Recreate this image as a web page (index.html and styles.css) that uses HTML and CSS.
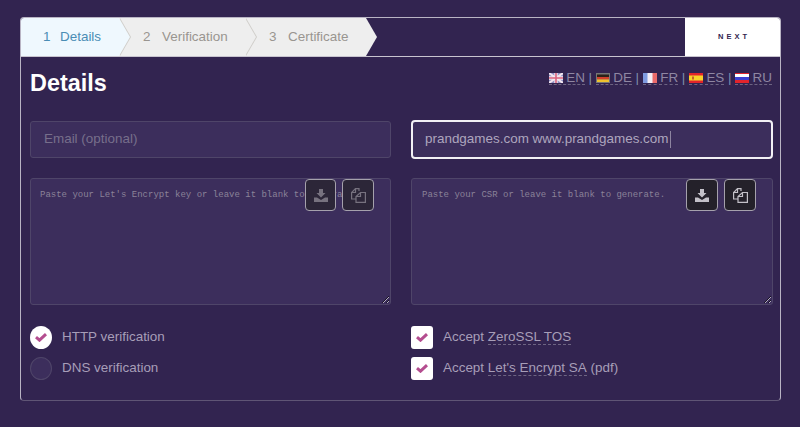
FILE: index.html
```html
<!DOCTYPE html>
<html lang="en">
<head>
<meta charset="utf-8">
<title>Details</title>
<link rel="stylesheet" href="styles.css">
</head>
<body>
<main class="card">
  <nav class="steps">
    <div class="step step-active step-1"><span class="num">1</span>Details</div>
    <div class="step step-2"><span class="num">2</span>Verification</div>
    <div class="step step-3"><span class="num">3</span>Certificate</div>
    <div class="next">NEXT</div>
  </nav>
  <section class="content">
    <header class="title-row">
      <h1>Details</h1>
      <div class="langs">
        <a class="lang"><svg class="flag" viewBox="0 0 14 10"><rect width="14" height="10" fill="#8f8fc4"/><path d="M0 0L14 10M14 0L0 10" stroke="#f3e6ee" stroke-width="2"/><path d="M7 0V10M0 5H14" stroke="#f4e9ef" stroke-width="3.4"/><path d="M7 0V10M0 5H14" stroke="#d9627e" stroke-width="1.6"/></svg> EN</a>
        <span class="sep">|</span>
        <a class="lang"><svg class="flag" viewBox="0 0 14 10"><rect width="14" height="10" fill="#777"/><rect x="1" y="1.5" width="12" height="2.5" fill="#2b2118"/><rect x="1" y="4" width="12" height="2.5" fill="#d2402c"/><rect x="1" y="6.5" width="12" height="2.5" fill="#eec22e"/></svg> DE</a>
        <span class="sep">|</span>
        <a class="lang"><svg class="flag" viewBox="0 0 14 10"><rect width="14" height="10" fill="#f3eef5"/><rect width="4.500" height="10" fill="#7f9be0"/><rect x="9.500" width="4.500" height="10" fill="#ea6a6a"/></svg> FR</a>
        <span class="sep">|</span>
        <a class="lang"><svg class="flag" viewBox="0 0 14 10"><rect width="14" height="10" fill="#e2242c"/><rect y="2.500" width="14" height="5" fill="#f6d32a"/><rect x="3" y="3.500" width="2" height="3" fill="#c9602a"/></svg> ES</a>
        <span class="sep">|</span>
        <a class="lang"><svg class="flag" viewBox="0 0 14 10"><rect width="14" height="10" fill="#e2242c"/><rect y="1" width="14" height="3" fill="#fff"/><rect y="4" width="14" height="3" fill="#3c3fd0"/></svg> RU</a>
      </div>
    </header>

    <div class="grid">
      <input class="field" type="text" placeholder="Email (optional)">
      <div class="field-wrap">
        <input class="field field-focus" type="text" value="prandgames.com www.prandgames.com">
        <span class="caret"></span>
      </div>

      <div class="area-wrap">
        <textarea class="area area-left" placeholder="Paste your Let's Encrypt key or leave it blank to generate."></textarea>
        <div class="tools tools-dim">
          <button class="tool tool-narrow" type="button"><svg class="icon-dl" viewBox="0 0 14 13"><path d="M5 0h4v4h2.500L7 8.500 2.500 4H5z" fill="currentColor"/><path d="M0 8.500h3L7 11l4-2.500h3V13H0z" fill="currentColor"/></svg></button>
          <button class="tool" type="button"><svg class="icon-copy" viewBox="0 0 15 15" fill="none" stroke="currentColor" stroke-width="1.200"><path d="M8 3V.6H4.500L.6 4.500V11H5"/><path d="M4.500.6v3.900H.6"/><path d="M9.500 4.500h4.900v9.900H5V8.500z"/><path d="M9.500 4.500v4H5"/></svg></button>
        </div>
      </div>
      <div class="area-wrap">
        <textarea class="area" placeholder="Paste your CSR or leave it blank to generate."></textarea>
        <div class="tools">
          <button class="tool" type="button"><svg class="icon-dl" viewBox="0 0 14 13"><path d="M5 0h4v4h2.500L7 8.500 2.500 4H5z" fill="currentColor"/><path d="M0 8.500h3L7 11l4-2.500h3V13H0z" fill="currentColor"/></svg></button>
          <button class="tool" type="button"><svg class="icon-copy" viewBox="0 0 15 15" fill="none" stroke="currentColor" stroke-width="1.200"><path d="M8 3V.6H4.500L.6 4.500V11H5"/><path d="M4.500.6v3.900H.6"/><path d="M9.500 4.500h4.900v9.900H5V8.500z"/><path d="M9.500 4.500v4H5"/></svg></button>
        </div>
      </div>

      <ul class="options">
        <li class="option"><span class="mark mark-round mark-on"><svg viewBox="0 0 12 9"><path d="M1 4.200l3.500 3 6.500-6" fill="none" stroke="currentColor" stroke-width="3"/></svg></span>HTTP verification</li>
        <li class="option"><span class="mark mark-round mark-off"></span>DNS verification</li>
      </ul>
      <ul class="options">
        <li class="option"><span class="mark mark-square mark-on"><svg viewBox="0 0 12 9"><path d="M1 4.200l3.500 3 6.500-6" fill="none" stroke="currentColor" stroke-width="3"/></svg></span>Accept&nbsp;<a class="link">ZeroSSL TOS</a></li>
        <li class="option"><span class="mark mark-square mark-on"><svg viewBox="0 0 12 9"><path d="M1 4.200l3.500 3 6.500-6" fill="none" stroke="currentColor" stroke-width="3"/></svg></span>Accept&nbsp;<a class="link">Let's Encrypt SA</a>&nbsp;(pdf)</li>
      </ul>
    </div>
  </section>
</main>
</body>
</html>
```

FILE: styles.css
```css
* { box-sizing: border-box; }

html, body { height: 100%; }

body {
  margin: 0;
  padding: 17px 19px 26px 20px;
  background: #322450;
  font-family: "Liberation Sans", Arial, sans-serif;
  font-size: 13.45px;
}

.card {
  width: 761px;
  height: 384px;
  border: 1px solid #b9b4c4;
  border-bottom-color: #5f5575;
  border-radius: 4px;
}

/* steps */
.steps {
  display: flex;
  height: 39px;
  border-bottom: 1px solid #c8c4cf;
}

.step {
  position: relative;
  display: flex;
  align-items: center;
  height: 38px;
  padding-bottom: 2px;
  background: #eeeeee;
  color: #999590;
}

.step::before,
.step::after {
  content: "";
  position: absolute;
  top: 0;
  width: 11px;
  height: 100%;
  clip-path: polygon(0 0, 100% 50%, 0 100%);
}

.step::before { left: 100%; margin-left: 1px; background: #cfcdc9; }
.step::after { left: 100%; background: #eeeeee; }

.step-active { background: #eff8fe; color: #4a8db5; border-top-left-radius: 3px; }
.step-active::after { background: #eff8fe; }

.step-1 { width: 98px; padding-left: 22px; z-index: 3; }
.step-2 { width: 126px; padding-left: 24px; z-index: 2; }
.step-3 { width: 121px; padding-left: 24px; z-index: 1; }
.step-3::before { display: none; }

.num { width: 17px; }
.step-2 .num, .step-3 .num { width: 19px; }

.next {
  margin-left: auto;
  width: 95px;
  height: 38px;
  padding: 0 0 1px 3px;
  display: flex;
  align-items: center;
  justify-content: center;
  background: #fff;
  color: #33254f;
  font-size: 7.5px;
  font-weight: bold;
  letter-spacing: 3px;
  border-top-right-radius: 3px;
}

/* content */
.content { padding: 0 7px 0 9px; }

.title-row {
  display: flex;
  justify-content: space-between;
  height: 64px;
}

h1 {
  margin: 12px 0 0;
  font-size: 23.4px;
  line-height: 28px;
  font-weight: bold;
  color: #fff;
}

.langs {
  margin-top: 12px;
  margin-right: 1px;
  line-height: 17px;
  color: #8f87a3;
  white-space: nowrap;
  word-spacing: -0.15px;
}

.lang {
  display: inline-block;
  height: 16px;
  color: #8f87a3;
  border-bottom: 1px dashed #6d6482;
}

.sep { color: #7e8cab; }

.flag {
  width: 14px;
  height: 10px;
  vertical-align: -1px;
}

/* grid */
.grid {
  display: grid;
  grid-template-columns: 361px 362px;
  column-gap: 20px;
}

.field {
  display: block;
  width: 100%;
  height: 37px;
  padding: 0 13px 2px;
  margin-bottom: 20px;
  background: #3c2e5c;
  border: 1px solid #4f4569;
  border-radius: 3px;
  color: #aea6be;
  font: 13.45px "Liberation Sans", Arial, sans-serif;
  outline: none;
}

.field::placeholder { color: #776f8b; opacity: 1; }

.field-wrap { position: relative; }

.field-focus {
  height: 39px;
  padding-left: 12px;
  margin: -1px 0 19px;
  border: 2px solid #f2f0f5;
  border-radius: 4px;
}

.caret {
  position: absolute;
  top: 10px;
  left: 259px;
  width: 1px;
  height: 17px;
  background: #8d84a0;
}

.area-wrap {
  position: relative;
  height: 127px;
}

.area {
  display: block;
  width: 100%;
  height: 100%;
  padding: 10px;
  background: #3c2e5c;
  border: 1px solid #4f4569;
  border-radius: 3px;
  color: #8a8298;
  font: 9px/12px "Liberation Mono", "Courier New", monospace;
  outline: none;
}

.area-left { padding-left: 9px; }

.area::placeholder { color: #8a8298; opacity: 1; }

.tools {
  position: absolute;
  top: 1px;
  right: 17px;
  display: flex;
  gap: 6px;
}

.tool {
  width: 32px;
  height: 32px;
  padding: 0;
  display: flex;
  align-items: center;
  justify-content: center;
  background: #24212a;
  border: 1px solid #a5a1ac;
  border-radius: 4px;
  color: #c3c0c8;
}

.tool-narrow { width: 31px; }

.tools-dim .tool {
  background: #2c2638;
  color: #77727f;
}

.icon-dl { width: 14px; height: 13px; display: block; }
.icon-copy { width: 15px; height: 15px; display: block; }

/* options */
.options {
  list-style: none;
  margin: 21px 0 0;
  padding: 0;
}

.option {
  display: flex;
  align-items: flex-start;
  height: 23px;
  line-height: 22px;
  margin-bottom: 8px;
  color: #a79eb8;
}

.mark {
  flex: none;
  display: flex;
  align-items: center;
  justify-content: center;
  width: 22px;
  height: 23px;
  margin-right: 10px;
  color: #b44d8f;
}

.mark svg { width: 12px; height: 9px; }

.mark-round { border-radius: 50%; }
.mark-square { border-radius: 3px; }
.mark-on { background: #fff; }
.mark-off { background: #3c2e5c; border: 1px solid #4f4569; }

.link { border-bottom: 1px dashed #6d6482; height: 19px; }
```
